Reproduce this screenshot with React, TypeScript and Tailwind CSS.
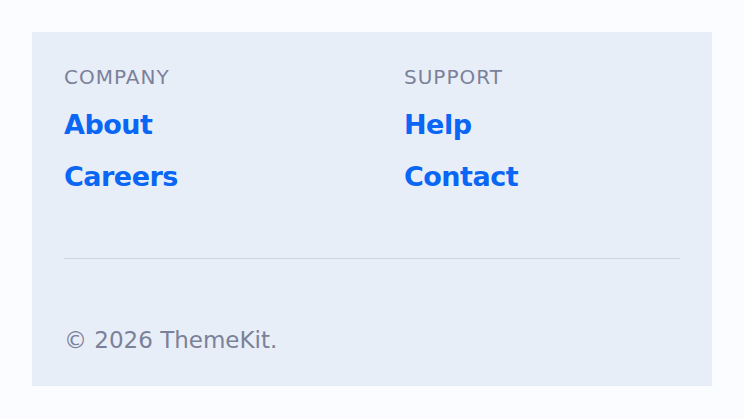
import React from 'react'

const columns = [
  { title: 'Company', links: ['About', 'Careers'] },
  { title: 'Support', links: ['Help', 'Contact'] },
]

export default function App() {
  return (
    <div className="min-h-screen bg-[#fafcff] p-8 font-['DejaVu_Sans',sans-serif]">
      <footer className="bg-[#e8eef8] px-8 pt-8 pb-[30px]">
        <div className="grid grid-cols-2 gap-16">
          {columns.map((col) => (
            <div key={col.title}>
              <h4 className="text-[20px] leading-[26px] tracking-[1px] uppercase text-[#7b8199]">{col.title}</h4>
              <ul className="mt-[17px] flex flex-col gap-[16px]">
                {col.links.map((link) => (
                  <li key={link}>
                    <a href="#" className="text-[27px] leading-[36px] tracking-[-0.5px] font-bold text-[#0a66f5]">
                      {link}
                    </a>
                  </li>
                ))}
              </ul>
            </div>
          ))}
        </div>
        <hr className="mt-[63px] border-t border-[#ccd5e2]" />
        <p className="mt-[65px] text-[23px] leading-[32px] text-[#7b8199]">© 2026 ThemeKit.</p>
      </footer>
    </div>
  )
}
